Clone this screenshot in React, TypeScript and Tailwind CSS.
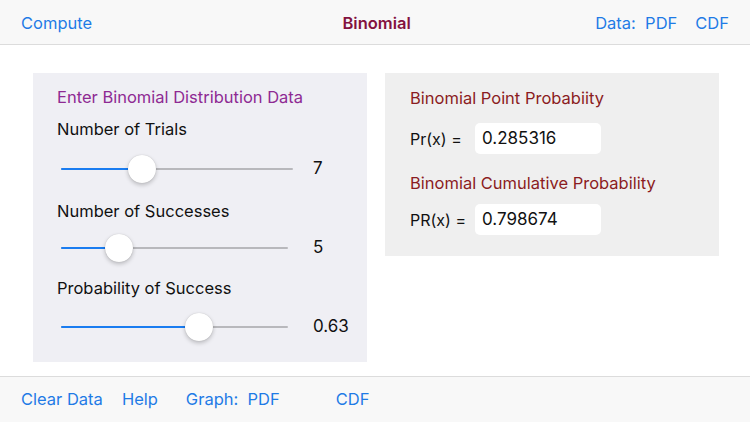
// Binomial distribution calculator screen: data sliders on the left, results on the right.

const FONT = "font-['Inter','Liberation_Sans',sans-serif]";

interface SliderRowProps {
  trackWidth: number;
  percent: number;
  value: string;
  className?: string;
}

function SliderRow({ trackWidth, percent, value, className = "" }: SliderRowProps) {
  return (
    <div className={`h-[40px] flex items-center ${className}`}>
      <div className="relative h-[40px] ml-[4px]" style={{ width: trackWidth }}>
        <div className="absolute left-0 right-0 top-[19px] h-[2px] rounded-full bg-[#b8b8bc]" />
        <div
          className="absolute left-0 top-[19px] h-[2px] rounded-full bg-[#1a7cf0]"
          style={{ width: `${percent}%` }}
        />
        <div
          className="absolute top-[6px] w-[28px] h-[28px] -ml-[14px] rounded-full bg-white shadow-[0_2px_4px_rgba(0,0,0,0.22),0_0_1px_rgba(0,0,0,0.2)]"
          style={{ left: `${percent}%` }}
        />
      </div>
      <span className="absolute left-[280px] text-[17px] text-[#111]">{value}</span>
    </div>
  );
}

function ResultRow({ label, value, className = "" }: { label: string; value: string; className?: string }) {
  return (
    <div className={`flex items-center h-[31px] ${className}`}>
      <span className="w-[65px] text-[16px] text-[#111]">{label}</span>
      <div className="w-[126px] h-[31px] rounded-[5px] bg-white flex items-center px-[7px] text-[17px] text-[#111]">
        {value}
      </div>
    </div>
  );
}

export default function App() {
  return (
    <div className={`w-[750px] h-[422px] bg-white flex flex-col ${FONT}`}>
      <header className="h-[45px] shrink-0 bg-[#f8f8f8] border-b border-[#dcdcdc] flex items-center pt-[3px] px-[21px] text-[16.5px]">
        <span className="text-[#1f7be6]">Compute</span>
        <span className="flex-1 text-center font-semibold text-[#83123f] pl-[66px]">Binomial</span>
        <span className="text-[#1f7be6]">Data:&nbsp; PDF</span>
        <span className="text-[#1f7be6] ml-[18px]">CDF</span>
      </header>

      <main className="flex-1 flex items-start gap-[18px] pt-[28px] pl-[33px]">
        <section className="relative w-[334px] h-[289px] bg-[#efeff4] pt-[12px] pl-[24px]">
          <h2 className="h-6 leading-6 text-[16.5px] text-[#8e2a93]">Enter Binomial Distribution Data</h2>
          <p className="mt-2 h-6 leading-6 text-[16.5px] text-[#111]">Number of Trials</p>
          <SliderRow trackWidth={232} percent={35} value="7" className="mt-2" />
          <p className="mt-[10px] h-6 leading-6 text-[16.5px] text-[#111]">Number of Successes</p>
          <SliderRow trackWidth={227} percent={25.5} value="5" className="mt-[5px]" />
          <p className="mt-2 h-6 leading-6 text-[16.5px] text-[#111]">Probability of Success</p>
          <SliderRow trackWidth={227} percent={60.8} value="0.63" className="mt-[7px]" />
        </section>

        <section className="w-[334px] h-[183px] bg-[#efefef] pt-[13px] pl-[25px]">
          <h2 className="h-6 leading-6 text-[16.5px] text-[#8b1c22]">Binomial Point Probabiity</h2>
          <ResultRow label="Pr(x) =" value="0.285316" className="mt-[13px]" />
          <h2 className="mt-[17px] h-6 leading-6 text-[16.5px] text-[#8b1c22]">Binomial Cumulative Probability</h2>
          <ResultRow label="PR(x) =" value="0.798674" className="mt-[9px]" />
        </section>
      </main>

      <footer className="h-[46px] shrink-0 bg-[#f8f8f8] border-t border-[#dcdcdc] flex items-center pl-[21px] text-[16.5px] text-[#1f7be6]">
        <span>Clear Data</span>
        <span className="ml-[19px]">Help</span>
        <span className="ml-[28px]">Graph:&nbsp; PDF</span>
        <span className="ml-[56px]">CDF</span>
      </footer>
    </div>
  );
}
